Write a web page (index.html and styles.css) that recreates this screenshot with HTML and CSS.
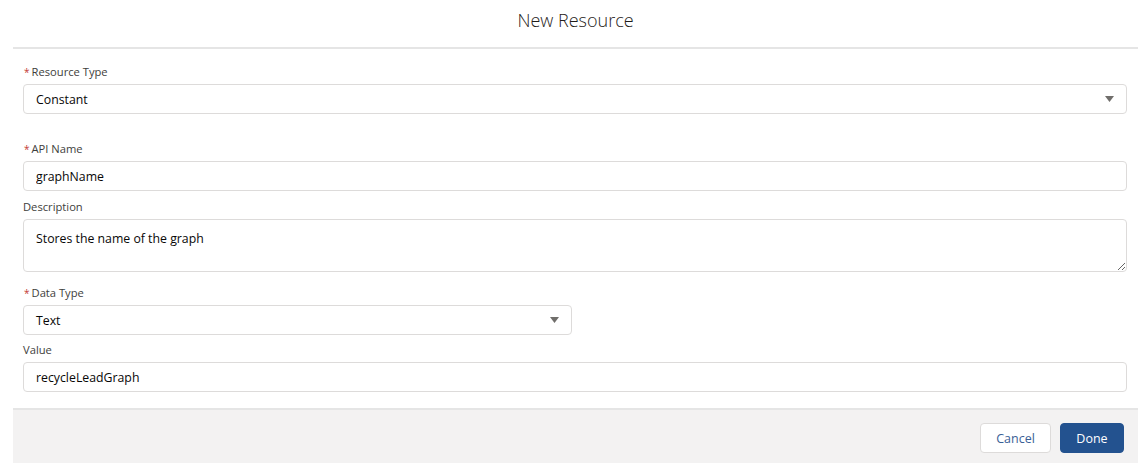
FILE: index.html
```html
<!DOCTYPE html>
<html lang="en">
  <head>
    <meta charset="UTF-8" />
    <meta name="viewport" content="width=device-width, initial-scale=1.0" />
    <title>New Resource</title>
    <link rel="stylesheet" href="styles.css">
  </head>
  <body>
    <div class="modal">
      <header class="modal-header">
        <h1>New Resource</h1>
      </header>

      <div class="modal-body">
        <div class="field">
          <label class="field-label"><abbr class="required">*</abbr>Resource Type</label>
          <div class="combobox">
            <span class="combobox-value">Constant</span>
            <svg class="caret" width="9" height="6" viewBox="0 0 9 6"><path d="M0 0h9L4.5 6z" /></svg>
          </div>
        </div>

        <div class="field field-section">
          <label class="field-label" for="apiName"><abbr class="required">*</abbr>API Name</label>
          <input class="text-input" id="apiName" type="text" value="graphName" />
        </div>

        <div class="field field-tight">
          <label class="field-label" for="description">Description</label>
          <textarea class="text-area" id="description">Stores the name of the graph</textarea>
        </div>

        <div class="field field-loose">
          <label class="field-label"><abbr class="required">*</abbr>Data Type</label>
          <div class="combobox combobox-half">
            <span class="combobox-value">Text</span>
            <svg class="caret" width="9" height="6" viewBox="0 0 9 6"><path d="M0 0h9L4.5 6z" /></svg>
          </div>
        </div>

        <div class="field field-closest">
          <label class="field-label" for="value">Value</label>
          <input class="text-input" id="value" type="text" value="recycleLeadGraph" />
        </div>
      </div>

      <footer class="modal-footer">
        <button class="btn btn-neutral">Cancel</button>
        <button class="btn btn-brand">Done</button>
      </footer>
    </div>
  </body>
</html>
```

FILE: styles.css
```css
:root {
  --text: #080707;
  --label: #3e3e3c;
  --border: #dddbda;
  --rule: #e5e5e5;
  --footer-bg: #f3f2f2;
  --brand: #23528f;
  --brand-text: #3a6096;
  --required: #c23934;
  --caret: #706e6b;
}

* {
  margin: 0;
  padding: 0;
  box-sizing: border-box;
}

body {
  background-color: #ffffff;
  color: var(--text);
  font-family: "Open Sans", "Liberation Sans", sans-serif;
  font-size: 12.3px;
}

.modal {
  margin: 0 10px 0 13px;
}

.modal-header {
  padding-top: 8px;
  height: 49px;
  border-bottom: 2px solid var(--rule);
  text-align: center;
}

.modal-header h1 {
  font-size: 18px;
  font-weight: 300;
  line-height: 24px;
  color: #1f1c1a;
}

.modal-body {
  padding: 14px 11px 16px 10px;
}

.field-label {
  display: block;
  height: 18px;
  margin-bottom: 3px;
  font-size: 11.2px;
  line-height: 18px;
  color: var(--label);
}

.required {
  color: var(--required);
  text-decoration: none;
  margin: 0 2px 0 1px;
  font-size: 10px;
  vertical-align: top;
}

.field-section {
  margin-top: 26px;
}

.field-tight {
  margin-top: 7px;
}

.field-loose {
  margin-top: 12px;
}

.field-closest {
  margin-top: 6px;
}

.combobox,
.text-input,
.text-area {
  width: 100%;
  height: 30px;
  border: 1px solid var(--border);
  border-radius: 4px;
  background-color: #ffffff;
  color: var(--text);
  font-family: inherit;
  font-size: 12.3px;
}

.combobox {
  display: flex;
  align-items: center;
  justify-content: space-between;
  padding: 0 12px;
}

.combobox-half {
  width: 549px;
}

.caret {
  fill: var(--caret);
}

.text-input {
  display: block;
  padding: 0 12px;
  outline: none;
}

.text-area {
  display: block;
  height: 53px;
  padding: 10px 12px 6px;
  line-height: 18px;
  resize: vertical;
  outline: none;
}

.modal-footer {
  display: flex;
  justify-content: flex-end;
  gap: 9px;
  height: 55px;
  padding: 13px 14px 0 0;
  background-color: var(--footer-bg);
  border-top: 2px solid var(--rule);
}

.btn {
  height: 30px;
  padding: 0 15px;
  border-radius: 4px;
  font-family: inherit;
  font-size: 12.5px;
  cursor: pointer;
}

.btn-neutral {
  width: 71px;
  background-color: #ffffff;
  border: 1px solid var(--border);
  color: var(--brand-text);
}

.btn-brand {
  width: 64px;
  background-color: var(--brand);
  border: 1px solid var(--brand);
  color: #ffffff;
}
```
